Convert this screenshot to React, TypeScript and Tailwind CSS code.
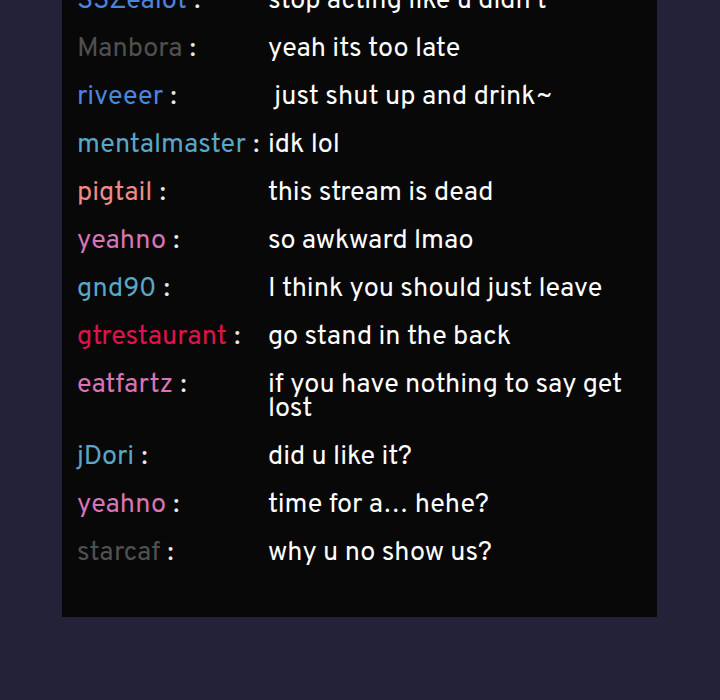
const messages = [
  { name: 'S3Zealot', color: 'text-[#4c84d8]', text: 'stop acting like u didn\u2019t' },
  { name: 'Manbora', color: 'text-[#505050]', text: 'yeah its too late' },
  { name: 'riveeer', color: 'text-[#4a86dc]', text: '\u00a0just shut up and drink~' },
  { name: 'mentalmaster', color: 'text-[#5aa6c6]', text: 'idk lol' },
  { name: 'pigtail', color: 'text-[#ef8a86]', text: 'this stream is dead' },
  { name: 'yeahno', color: 'text-[#d874b4]', text: 'so awkward lmao' },
  { name: 'gnd90', color: 'text-[#5aa6c6]', text: 'I think you should just leave' },
  { name: 'gtrestaurant', color: 'text-[#e0124e]', text: 'go stand in the back' },
  { name: 'eatfartz', color: 'text-[#d874b4]', text: 'if you have nothing to say get lost' },
  { name: 'jDori', color: 'text-[#5aa6c6]', text: 'did u like it?' },
  { name: 'yeahno', color: 'text-[#d874b4]', text: 'time for a\u2026 hehe?' },
  { name: 'starcaf', color: 'text-[#505050]', text: 'why u no show us?' },
];

export default function App() {
  return (
    <div className="min-h-[700px] w-[720px] bg-[#242238] overflow-hidden font-['Overpass','Open_Sans',sans-serif]">
      <div className="ml-[62px] w-[595px] h-[617px] bg-[#080808] overflow-hidden">
        <div className="-mt-[11px] px-[15px] flex flex-col gap-[24px]">
          {messages.map((m, i) => (
            <div key={i} className="grid grid-cols-[191px_1fr] text-[27px] leading-[24px]">
              <div>
                <span className={m.color}>{m.name}</span>
                <span className="ml-[1px] text-[#e8e8e8]"> :</span>
              </div>
              <div className="text-white pr-[2px]">{m.text}</div>
            </div>
          ))}
        </div>
      </div>
    </div>
  );
}
